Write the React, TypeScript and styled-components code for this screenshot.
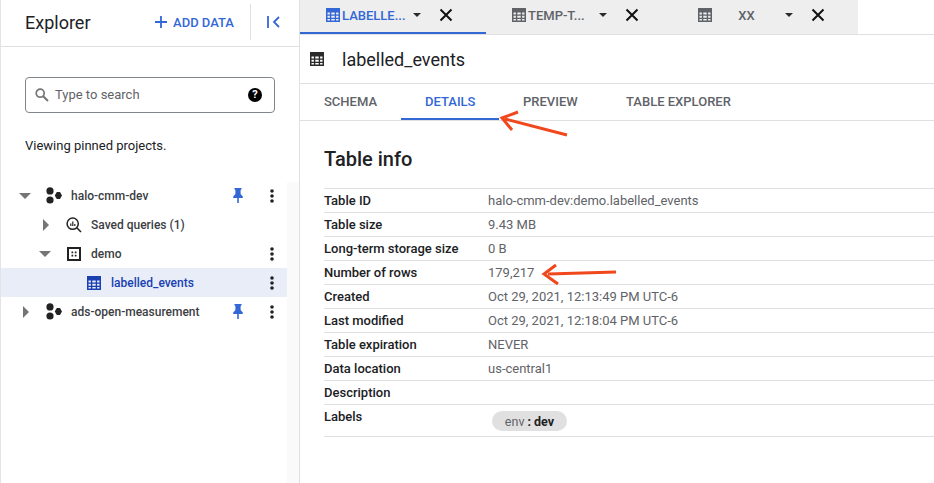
import { FC, ReactNode } from "react";
import styled, { createGlobalStyle } from "styled-components";

const BLUE = "#3367d6";

const rows = [
  { name: "Table ID", value: "halo-cmm-dev:demo.labelled_events" },
  { name: "Table size", value: "9.43 MB" },
  { name: "Long-term storage size", value: "0 B" },
  { name: "Number of rows", value: "179,217" },
  { name: "Created", value: "Oct 29, 2021, 12:13:49 PM UTC-6" },
  { name: "Last modified", value: "Oct 29, 2021, 12:18:04 PM UTC-6" },
  { name: "Table expiration", value: "NEVER" },
  { name: "Data location", value: "us-central1" },
  { name: "Description", value: "" },
];

const TableIcon: FC<{ color: string; size?: number }> = ({ color, size = 14 }) => (
  <svg width={size} height={size} viewBox="0 0 14 14">
    <path
      fill={color}
      fillRule="evenodd"
      d="M0 0h14v14H0zM1.5 4.5v2h2.4v-2zM5.3 4.5v2h3.4v-2zM10.1 4.5v2h2.4v-2zM1.5 7.8v2h2.4v-2zM5.3 7.8v2h3.4v-2zM10.1 7.8v2h2.4v-2zM1.5 11v1.6h2.4V11zM5.3 11v1.6h3.4V11zM10.1 11v1.6h2.4V11z"
    />
  </svg>
);

const Close = () => (
  <svg width="14" height="14" viewBox="0 0 14 14">
    <path d="M1.5 1.5l11 11M12.5 1.5l-11 11" stroke="#111" strokeWidth="2" fill="none" />
  </svg>
);

const Caret = () => (
  <svg width="8" height="4" viewBox="0 0 8 4">
    <path d="M0 0h8L4 4z" fill="#2b2b2b" />
  </svg>
);

const ProjectIcon = () => (
  <svg width="16" height="17" viewBox="0 0 16 17">
    <circle cx="4" cy="3.9" r="3.6" fill="#222" />
    <circle cx="4" cy="13" r="3.6" fill="#222" />
    <path d="M8.8 8.4l2-3.5h3.2l2 3.5-2 3.5h-3.2z" fill="#222" />
  </svg>
);

const Pin = () => (
  <svg width="10" height="15" viewBox="0 0 10 15">
    <path d="M1.5 0h7v1.3L7.6 2v4l2.2 2.4V10H5.8v5H4.2v-5H.2V8.4L2.4 6V2l-.9-.7z" fill={BLUE} />
  </svg>
);

const Dots = () => (
  <svg width="4" height="14" viewBox="0 0 4 14">
    <circle cx="2" cy="2" r="1.8" fill="#222" />
    <circle cx="2" cy="7" r="1.8" fill="#222" />
    <circle cx="2" cy="12" r="1.8" fill="#222" />
  </svg>
);

const Twisty: FC<{ open?: boolean }> = ({ open }) => (
  <TwistyGlyph $open={open} width="12" height="12" viewBox="0 0 12 12">
    {open ? <path d="M0 3h12L6 9z" fill="#757575" /> : <path d="M3 0l6 6-6 6z" fill="#757575" />}
  </TwistyGlyph>
);

const QueryIcon = () => (
  <svg width="16" height="16" viewBox="0 0 16 16">
    <circle cx="6.7" cy="6.7" r="5.6" fill="none" stroke="#222" strokeWidth="1.5" />
    <path d="M10.8 10.8L15 15" stroke="#222" strokeWidth="1.6" />
    <path d="M4.8 6.5v2.4M6.8 4.6v4.3M8.8 7v1.9" stroke="#222" strokeWidth="1.2" />
  </svg>
);

const DatasetIcon = () => (
  <svg width="15" height="14" viewBox="-1 0 15 14">
    <rect x="1" y="1" width="12" height="12" fill="none" stroke="#222" strokeWidth="2" />
    <path d="M4.5 4.5h1.7v1.7H4.5zM7.8 4.5h1.7v1.7H7.8zM4.5 7.8h1.7v1.7H4.5zM7.8 7.8h1.7v1.7H7.8z" fill="#222" />
  </svg>
);

const TreeRow: FC<{
  indent: number;
  open?: boolean;
  leaf?: boolean;
  icon: ReactNode;
  label: string;
  labelGap: number;
  pinned?: boolean;
  menu?: boolean;
  selected?: boolean;
}> = ({ indent, open, leaf, icon, label, labelGap, pinned, menu, selected }) => (
  <Row $selected={selected} $indent={indent}>
    <TwistySlot>{!leaf && <Twisty open={open} />}</TwistySlot>
    <RowIcon $gap={labelGap}>{icon}</RowIcon>
    <RowLabel $selected={selected}>{label}</RowLabel>
    <PinSlot>{pinned && <Pin />}</PinSlot>
    <MenuSlot>{menu && <Dots />}</MenuSlot>
  </Row>
);

const App: FC = () => (
  <Page>
    <GlobalStyle />
    <Sidebar>
      <SideHeader>
        <SideTitle>Explorer</SideTitle>
        <AddData>
          <svg width="12" height="12" viewBox="0 0 12 12">
            <path d="M6 0v12M0 6h12" stroke={BLUE} strokeWidth="1.8" />
          </svg>
          ADD DATA
        </AddData>
        <Collapse>
          <svg width="13" height="12" viewBox="0 0 13 12">
            <path d="M1 0v12" stroke={BLUE} strokeWidth="1.8" />
            <path d="M12 1L7 6l5 5" stroke={BLUE} strokeWidth="1.8" fill="none" />
          </svg>
        </Collapse>
      </SideHeader>
      <SearchBox>
        <svg width="14" height="14" viewBox="0 0 14 14">
          <circle cx="5.2" cy="5.2" r="4" fill="none" stroke="#757575" strokeWidth="1.7" />
          <path d="M8.2 8.2L13 13" stroke="#757575" strokeWidth="2" />
        </svg>
        <SearchText>Type to search</SearchText>
        <HelpDot>?</HelpDot>
      </SearchBox>
      <Viewing>Viewing pinned projects.</Viewing>
      <TreeArea>
        <Tree>
          <TreeRow indent={19} open icon={<ProjectIcon />} label="halo-cmm-dev" labelGap={9} pinned menu />
          <TreeRow indent={39} icon={<QueryIcon />} label="Saved queries (1)" labelGap={9} />
          <TreeRow indent={39} open icon={<DatasetIcon />} label="demo" labelGap={10} menu />
          <TreeRow indent={60} leaf icon={<TableIcon color="#1a3fb0" />} label="labelled_events" labelGap={10} menu selected />
          <TreeRow indent={19} icon={<ProjectIcon />} label="ads-open-measurement" labelGap={9} pinned menu />
        </Tree>
        <ScrollTrack />
      </TreeArea>
    </Sidebar>
    <Main>
      <TabBar>
        <TabStrip>
          <Tab $active>
            <TableIcon color={BLUE} />
            <TabLabel $active>LABELLE...</TabLabel>
            <Caret />
            <Close />
          </Tab>
          <Tab>
            <TableIcon color="#5f6368" />
            <TabLabel>TEMP-T...</TabLabel>
            <Caret />
            <Close />
          </Tab>
          <Tab>
            <TableIcon color="#5f6368" />
            <TabLabel $center>XX</TabLabel>
            <Caret />
            <Close />
          </Tab>
        </TabStrip>
      </TabBar>
      <TitleRow>
        <TableIcon color="#2b2b2b" />
        <PageTitle>labelled_events</PageTitle>
      </TitleRow>
      <SubTabs>
        <SubTab $width={101}>SCHEMA</SubTab>
        <SubTab $width={98} $active>DETAILS</SubTab>
        <SubTab $width={103}>PREVIEW</SubTab>
        <SubTab $width={150}>TABLE EXPLORER</SubTab>
      </SubTabs>
      <Details>
        <SectionTitle>Table info</SectionTitle>
        <InfoTable>
          {rows.map((row) => (
            <InfoRow key={row.name}>
              <InfoName>{row.name}</InfoName>
              <InfoValue>{row.value}</InfoValue>
            </InfoRow>
          ))}
          <LabelsRow>
            <InfoName>Labels</InfoName>
            <Chip>
              env <b>: dev</b>
            </Chip>
          </LabelsRow>
        </InfoTable>
      </Details>
      <Arrows width="634" height="483" viewBox="0 0 634 483">
        <path d="M267 135L205 119" stroke="#f1471d" strokeWidth="3" fill="none" />
        <path d="M218 112L202 118L212 130" stroke="#f1471d" strokeWidth="3" fill="none" />
        <path d="M316 272L248 274" stroke="#f1471d" strokeWidth="3" fill="none" />
        <path d="M256 265L244 274L258 284" stroke="#f1471d" strokeWidth="3" fill="none" />
      </Arrows>
    </Main>
  </Page>
);

export default App;

const GlobalStyle = createGlobalStyle`
  html, body {
    margin: 0;
    padding: 0;
    background: #fff;
    overflow: hidden;
  }
  body {
    font-family: Roboto, "Liberation Sans", sans-serif;
  }
`;

const Page = styled.div`
  display: flex;
  width: 934px;
  height: 483px;
  overflow: hidden;
  color: #202124;
`;

const Sidebar = styled.aside`
  display: flex;
  flex-direction: column;
  flex: none;
  box-sizing: border-box;
  width: 300px;
  border-left: 1px solid #e4e4e4;
  border-right: 1px solid #e0e0e0;
`;

const SideHeader = styled.div`
  display: flex;
  align-items: center;
  box-sizing: border-box;
  height: 47px;
  padding: 0 0 2px 24px;
  border-bottom: 1px solid #e0e0e0;
`;

const SideTitle = styled.h2`
  flex: 1;
  margin: 0;
  font-size: 18px;
  font-weight: 400;
  color: #202124;
`;

const AddData = styled.div`
  display: flex;
  align-items: center;
  gap: 6px;
  font-size: 13px;
  font-weight: 500;
  color: ${BLUE};
`;

const Collapse = styled.div`
  display: flex;
  align-items: center;
  box-sizing: border-box;
  height: 36px;
  margin-left: 16px;
  padding-left: 16px;
  width: 49px;
  border-left: 1px solid #e0e0e0;
`;

const SearchBox = styled.div`
  display: flex;
  align-items: center;
  box-sizing: border-box;
  width: 250px;
  height: 36px;
  margin: 30px 0 0 24px;
  padding: 0 12px 1px 9px;
  border: 1px solid #80868b;
  border-radius: 4px;
`;

const SearchText = styled.span`
  flex: 1;
  margin-left: 6px;
  font-size: 13px;
  color: #5f6368;
`;

const HelpDot = styled.span`
  display: flex;
  align-items: center;
  justify-content: center;
  width: 14px;
  height: 14px;
  border-radius: 50%;
  background: #000;
  color: #fff;
  font-size: 11px;
  font-weight: 700;
`;

const Viewing = styled.p`
  margin: 24px 0 0 24px;
  font-size: 13px;
  line-height: 18px;
  color: #202124;
`;

const TreeArea = styled.div`
  display: flex;
  flex: 1;
  margin-top: 26px;
`;

const Tree = styled.div`
  flex: 1;
`;

const ScrollTrack = styled.div`
  flex: none;
  width: 12px;
  margin-top: 1px;
  background: #fafafa;
`;

const Row = styled.div<{ $selected?: boolean; $indent: number }>`
  display: flex;
  align-items: center;
  height: 29px;
  padding-left: ${(p) => p.$indent}px;
  background: ${(p) => (p.$selected ? "#e8edf8" : "transparent")};
`;

const TwistySlot = styled.div`
  display: flex;
  flex: none;
  width: 26px;
`;

const TwistyGlyph = styled.svg<{ $open?: boolean }>`
  margin-left: ${(p) => (p.$open ? "-1px" : "0")};
`;

const RowIcon = styled.div<{ $gap: number }>`
  display: flex;
  flex: none;
  margin-right: ${(p) => p.$gap}px;
`;

const RowLabel = styled.span<{ $selected?: boolean }>`
  flex: 1;
  font-size: 12px;
  font-weight: 500;
  white-space: nowrap;
  color: ${(p) => (p.$selected ? "#1a3fb0" : "#3c4043")};
`;

const PinSlot = styled.div`
  display: flex;
  justify-content: center;
  flex: none;
  width: 14px;
`;

const MenuSlot = styled.div`
  display: flex;
  justify-content: center;
  flex: none;
  width: 14px;
  margin: 0 8px 0 20px;
`;

const Main = styled.main`
  position: relative;
  flex: 1;
  min-width: 0;
`;

const TabBar = styled.div`
  box-sizing: border-box;
  height: 35px;
  border-bottom: 1px solid #e0e0e0;
`;

const TabStrip = styled.div`
  display: flex;
  width: 558px;
  height: 34px;
  background: #eeeeee;
`;

const Tab = styled.div<{ $active?: boolean }>`
  display: flex;
  align-items: center;
  box-sizing: border-box;
  width: 186px;
  height: 34px;
  padding: 0 0 2px 26px;
  border-bottom: 2px solid ${(p) => (p.$active ? BLUE : "transparent")};

  & > svg:nth-of-type(2) {
    margin-right: 18px;
  }
`;

const TabLabel = styled.span<{ $active?: boolean; $center?: boolean }>`
  box-sizing: border-box;
  width: 73px;
  padding: 0 ${(p) => (p.$center ? "6px" : "0")} 0 2px;
  font-size: 13px;
  font-weight: 500;
  white-space: nowrap;
  text-align: ${(p) => (p.$center ? "center" : "left")};
  color: ${(p) => (p.$active ? BLUE : "#5f6368")};
`;

const TitleRow = styled.div`
  display: flex;
  align-items: center;
  gap: 18px;
  box-sizing: border-box;
  height: 49px;
  padding-left: 10px;
  border-bottom: 1px solid #e0e0e0;
`;

const PageTitle = styled.h1`
  margin: 0;
  font-size: 18px;
  font-weight: 400;
  color: #202124;
`;

const SubTabs = styled.div`
  display: flex;
  box-sizing: border-box;
  height: 37px;
  border-bottom: 1px solid #e0e0e0;
`;

const SubTab = styled.div<{ $width: number; $active?: boolean }>`
  display: flex;
  align-items: center;
  box-sizing: border-box;
  width: ${(p) => p.$width}px;
  height: 36px;
  padding-left: 24px;
  font-size: 13px;
  font-weight: 500;
  white-space: nowrap;
  color: ${(p) => (p.$active ? BLUE : "#5f6368")};
  border-bottom: 2px solid ${(p) => (p.$active ? BLUE : "transparent")};
`;

const Details = styled.section`
  padding-left: 24px;
`;

const SectionTitle = styled.h3`
  margin: 25px 0 16px;
  font-size: 20px;
  line-height: 26px;
  font-weight: 500;
  color: #202124;
`;

const InfoTable = styled.div`
  border-top: 1px solid #e0e0e0;
`;

const InfoRow = styled.div`
  display: grid;
  grid-template-columns: 164px 1fr;
  align-items: center;
  box-sizing: border-box;
  height: 24px;
  border-bottom: 1px solid #e0e0e0;
`;

const LabelsRow = styled(InfoRow)`
  align-items: start;
  height: 32px;
  padding-top: 4px;
`;

const InfoName = styled.div`
  font-size: 13px;
  font-weight: 500;
  color: #202124;
`;

const InfoValue = styled.div`
  font-size: 13px;
  color: #5f6368;
`;

const Chip = styled.div`
  display: flex;
  align-items: center;
  justify-content: center;
  gap: 3px;
  box-sizing: border-box;
  width: 75px;
  height: 20px;
  margin: 2px 0 0 4px;
  border-radius: 10px;
  background: #e0e0e0;
  font-size: 12.5px;
  color: #5f6368;

  b {
    font-weight: 700;
    color: #202124;
  }
`;

const Arrows = styled.svg`
  position: absolute;
  top: 0;
  left: 0;
  pointer-events: none;
`;
